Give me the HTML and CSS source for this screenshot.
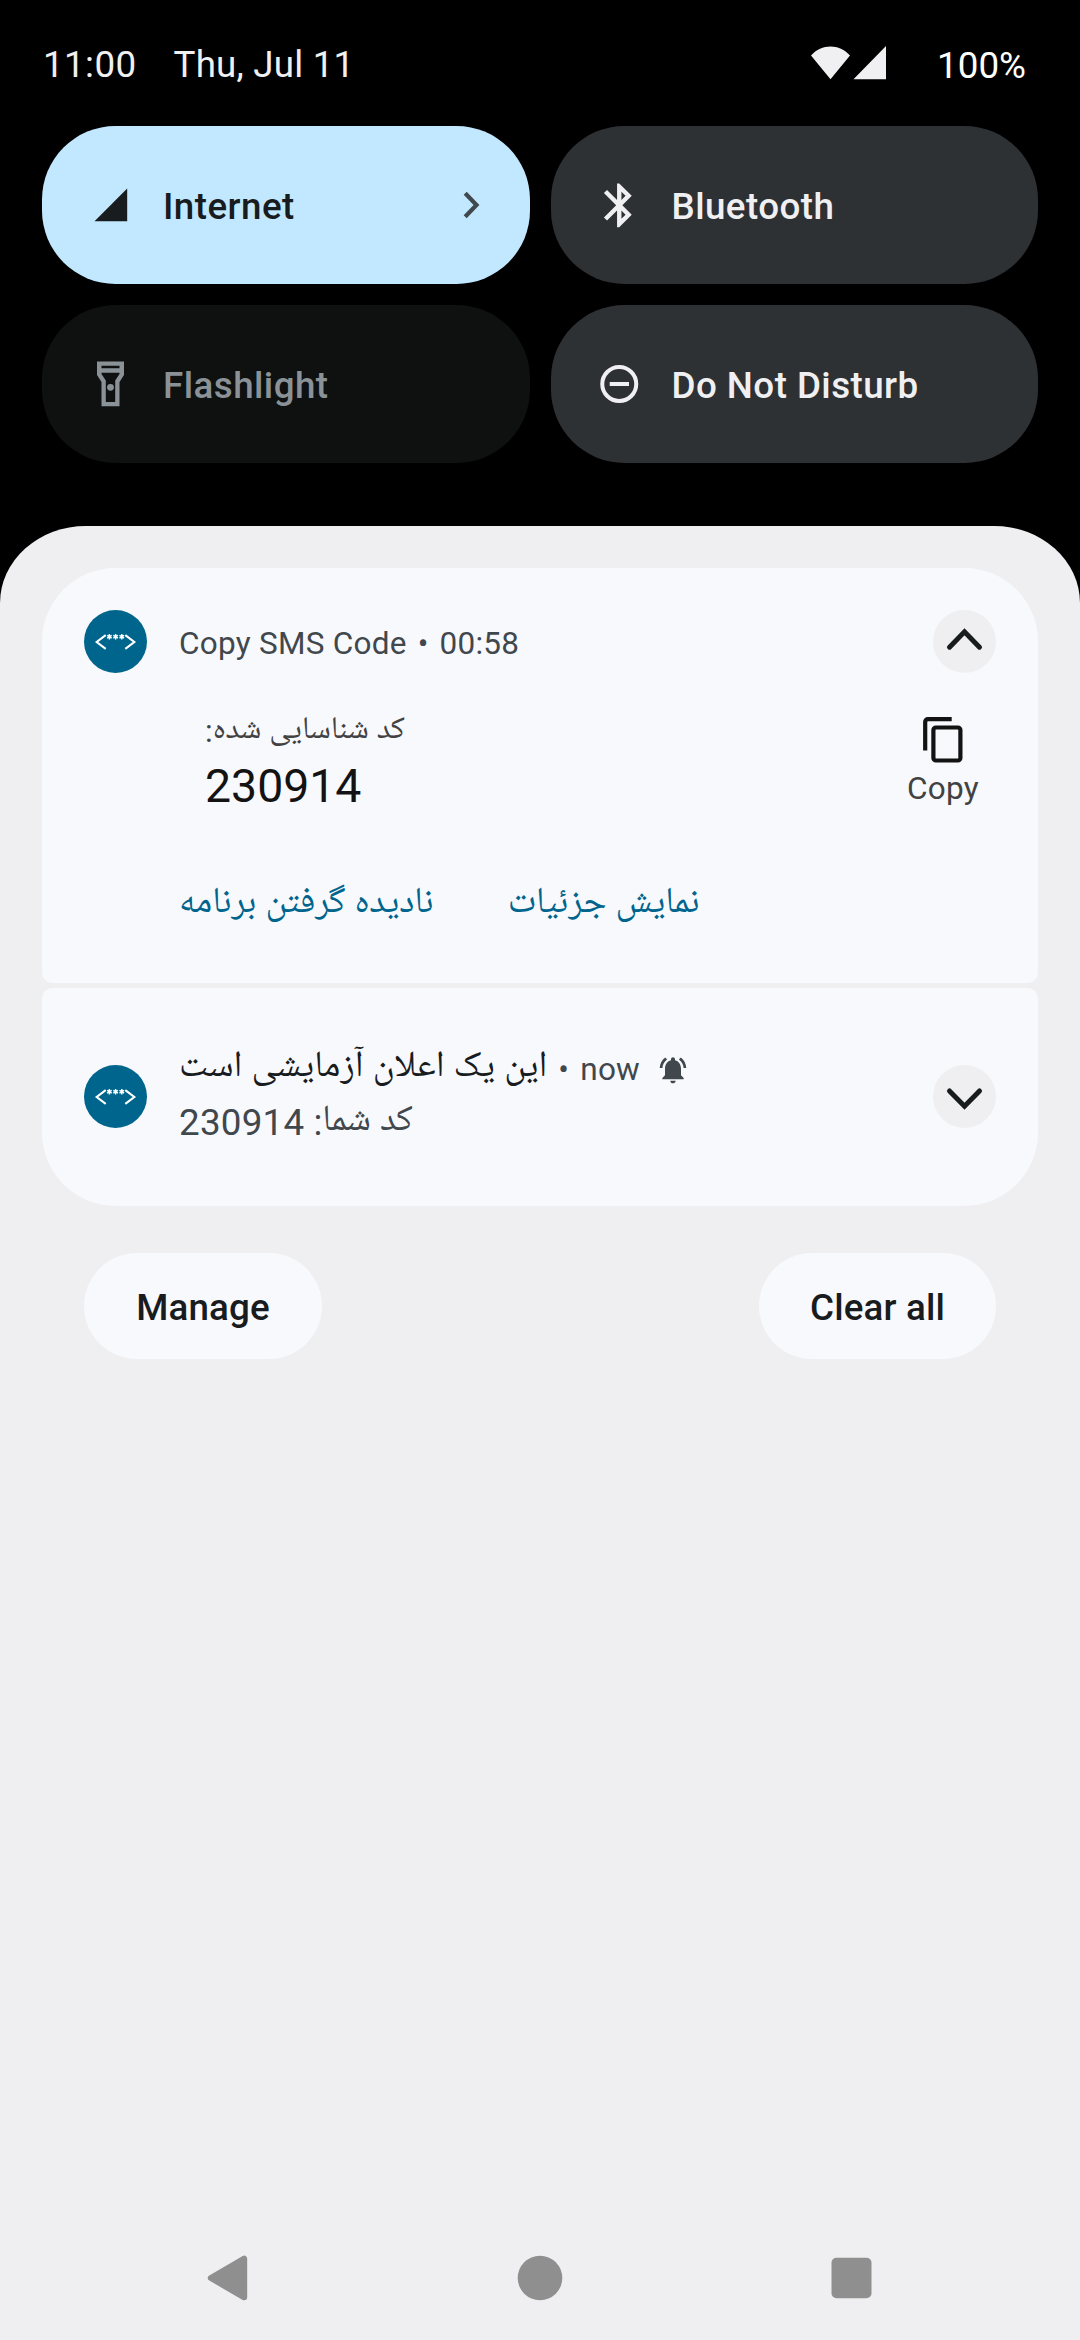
FILE: index.html
```html
<!DOCTYPE html>
<html lang="en">
<head>
<meta charset="utf-8">
<title>Notification shade</title>
<link rel="stylesheet" href="styles.css">
</head>
<body>
<svg class="defs" width="0" height="0">
  <symbol id="app" viewBox="0 0 63 63">
    <g fill="none" stroke="#fff" stroke-width="2.100">
      <path d="M21.700 25.200l-9 6.800 9 6.800M41.300 25.200l9 6.800-9 6.800"/>
      <path stroke-width="1.400" d="M25.400 24v5.400M23.100 25.300l4.600 2.800M23.100 28.100l4.600-2.800M31.600 24v5.400M29.300 25.300l4.600 2.800M29.300 28.100l4.600-2.800M37.800 24v5.400M35.500 25.300l4.600 2.800M35.500 28.100l4.600-2.800"/>
    </g>
  </symbol>
</svg>
<header class="status">
  <span class="time">11:00</span>
  <span class="date">Thu, Jul 11</span>
  <svg class="signals" viewBox="0 0 76 34"><path d="M0 9.500C10.500-2.600 28.500-2.600 39 9.500L19.500 33.200zM42.500 33.200H75V0z" fill="#f0f0f2"/></svg>
  <span class="battery">100%</span>
</header>
<section class="tiles">
  <div class="tile on">
    <svg class="ico" viewBox="0 0 52.500 52.500"><path d="M10.500 42.200H43.200V9.500z" fill="currentColor"/></svg>
    <span>Internet</span>
    <svg class="more" viewBox="0 0 17 28"><path d="M2.200 2.200L13.500 14 2.200 25.800" fill="none" stroke="#41484d" stroke-width="4.200"/></svg>
  </div>
  <div class="tile">
    <svg class="ico" viewBox="0 0 24 24"><path fill="currentColor" d="M17.710 7.710L12 2h-1v7.590L6.410 5 5 6.410 10.590 12 5 17.590 6.410 19 11 14.410V22h1l5.710-5.710-4.300-4.290 4.300-4.290zM13 5.830l1.880 1.880L13 9.590V5.830zm1.880 10.460L13 18.170v-3.760l1.880 1.880z"/></svg>
    <span>Bluetooth</span>
  </div>
  <div class="tile off">
    <svg class="ico" viewBox="0 0 52.500 52.500"><path fill="currentColor" fill-rule="evenodd" d="M13 3.500H40V17L35.500 24V48.200H17.500V24L13 17zM17.500 7.700V10.300H35.500V7.700zM17.500 14.800V16L21.800 22.500V44H31.200V22.500L35.500 16V14.800z"/><circle cx="26.500" cy="29.300" r="3.400" fill="currentColor"/></svg>
    <span>Flashlight</span>
  </div>
  <div class="tile">
    <svg class="ico" viewBox="0 0 52.500 52.500"><g fill="none" stroke="currentColor" stroke-width="4"><circle cx="26.250" cy="26" r="17"/><path d="M16.700 26H36"/></g></svg>
    <span>Do Not Disturb</span>
  </div>
</section>
<main class="shade">
  <article class="card first">
    <svg class="app"><use href="#app"/></svg>
    <div class="body">
      <div class="meta"><span>Copy SMS Code</span><span class="dot">•</span><span>00:58</span></div>
      <div class="content">
        <div class="code">
          <span class="fa label" dir="rtl">کد شناسایی شده:</span>
          <span class="number">230914</span>
        </div>
        <div class="copy">
          <svg viewBox="0 0 40 46"><g fill="none" stroke="#131313" stroke-width="4.200"><path d="M28.700 2.200H5Q2.200 2.200 2.200 5V33.500"/><rect x="10.400" y="10.500" width="27" height="33" rx="2.500"/></g></svg>
          <span>Copy</span>
        </div>
      </div>
      <div class="actions">
        <span class="fa" dir="rtl">نادیده گرفتن برنامه</span>
        <span class="fa" dir="rtl">نمایش جزئیات</span>
      </div>
    </div>
    <div class="expand"><svg viewBox="0 0 63 63"><path d="M16.500 37.200L31.500 21.800 46.500 37.200"/></svg></div>
  </article>
  <article class="card second">
    <svg class="app"><use href="#app"/></svg>
    <div class="body">
      <div class="title"><span class="fa" dir="rtl">این یک اعلان آزمایشی است</span><span class="dot">•</span><span>now</span>
        <svg class="bell" viewBox="0 0 24 24"><path fill="#41484d" d="M7.580 4.080L6.150 2.650C3.750 4.480 2.170 7.300 2.030 10.500h2c.150-2.650 1.510-4.970 3.550-6.420zm12.390 6.420h2c-.150-3.200-1.730-6.020-4.120-7.850l-1.420 1.430c2.020 1.450 3.390 3.770 3.540 6.420zM18 11c0-3.070-1.640-5.640-4.500-6.320V4c0-.830-.670-1.500-1.500-1.500s-1.500.670-1.500 1.500v.680C7.630 5.360 6 7.920 6 11v5l-2 2v1h16v-1l-2-2v-5zm-6 11c.140 0 .270-.010.400-.040.650-.140 1.180-.580 1.440-1.180.100-.240.150-.500.150-.780h-4c.010 1.100.900 2 2.010 2z"/></svg>
      </div>
      <div class="text"><span>230914</span><span class="fa" dir="rtl">کد شما:</span></div>
    </div>
    <div class="expand"><svg viewBox="0 0 63 63"><path d="M16.500 26L31.500 41.200 46.500 26"/></svg></div>
  </article>
  <footer class="buttons"><span class="button">Manage</span><span class="button clear">Clear all</span></footer>
  <nav class="nav">
    <svg viewBox="0 0 46 46"><path d="M40.200 3.700V42.300L6.800 23z" fill="#8f8f8f" stroke="#8f8f8f" stroke-width="6" stroke-linejoin="round"/></svg>
    <svg viewBox="0 0 46 46"><circle cx="23" cy="23" r="22.300" fill="#8f8f8f"/></svg>
    <svg viewBox="0 0 46 46"><rect x="1.500" y="2.700" width="40" height="40.500" rx="5" fill="#8f8f8f"/></svg>
  </nav>
</main>
</body>
</html>
```
FILE: styles.css
```css
* { box-sizing: border-box; }
body {
  margin: 0;
  width: 1080px;
  height: 2340px;
  display: flex;
  flex-direction: column;
  background: #000;
  font-family: Roboto, "Noto Naskh Arabic UI", "Noto Naskh Arabic", "DejaVu Sans", sans-serif;
  overflow: hidden;
}
span { white-space: nowrap; }
svg { display: block; flex: none; }
.defs { position: absolute; }

.status {
  height: 126px;
  padding: 3px 54px 0 43px;
  display: flex;
  align-items: center;
  font-size: 36.75px;
  color: #f0f0f2;
}
.time { letter-spacing: 0.4px; }
.date { margin-left: 37px; letter-spacing: 0.2px; }
.signals { width: 76px; height: 34px; margin-left: auto; margin-bottom: 4px; }
.battery { margin: 2px 0 0 50px; color: #fff; }

.tiles {
  display: grid;
  grid-template-columns: 1fr 1fr;
  grid-auto-rows: 158px;
  gap: 21px;
  padding: 0 42px;
  height: 400px;
}
.tile {
  display: flex;
  align-items: center;
  padding: 0 50px 0 42px;
  border-radius: 73.5px;
  background: #2e3134;
  color: #f0f0f2;
  font-size: 36.75px;
  font-weight: 500;
  letter-spacing: 0.45px;
}
.tile span { margin: 3px 0 0 26.5px; }
.tile.on { background: #c2e8ff; color: #191c1e; }
.tile.off { background: #0e1110; color: #8b9297; }
.ico { width: 52.5px; height: 52.5px; }
.more { width: 17px; height: 28px; margin-left: auto; }

.shade {
  flex: 1;
  display: flex;
  flex-direction: column;
  padding: 42px 42px 0;
  border-radius: 86px 86px 0 0 / 77px 77px 0 0;
  background: #efeff1;
}
.card {
  display: flex;
  background: #f8f9fd;
  color: #41484d;
  font-size: 31.5px;
  letter-spacing: 0.25px;
}
.fa { letter-spacing: 0; }
.first { height: 415px; padding: 42px 42px 0; border-radius: 73.5px 73.5px 10.5px 10.5px; }
.second { height: 218px; margin-top: 5px; padding: 0 42px; border-radius: 10.5px 10.5px 73.5px 73.5px; }
.app { width: 63px; height: 63px; border-radius: 50%; background: #00658d; }
.body { flex: 1; margin-left: 32px; }
.expand { width: 63px; height: 63px; border-radius: 50%; background: #efeff1; margin-left: -63px; }
.expand path { fill: none; stroke: #191c1e; stroke-width: 5; stroke-linecap: round; }
.second .app, .second .expand { margin-top: 77px; }
.meta { display: flex; height: 66px; line-height: 67px; }
.dot { margin: 0 11px; }

.content { display: flex; justify-content: space-between; height: 172px; }
.code { display: flex; flex-direction: column; padding-left: 26px; }
.label { height: 68px; line-height: 112px; font-size: 31.7px; color: #424242; }
.number { height: 60px; line-height: 84px; font-size: 46.4px; letter-spacing: 0; color: #131313; }
.copy { width: 107px; padding-top: 41px; display: flex; flex-direction: column; align-items: center; color: #424242; }
.copy svg { width: 40px; height: 46px; }
.copy span { line-height: 51px; padding-left: 1px; }
.actions { display: flex; gap: 74px; color: #00658d; font-size: 36.6px; line-height: 113px; }

.second .body { padding-top: 60px; }
.title { display: flex; height: 50px; line-height: 43px; }
.title .fa { color: #191c1e; font-size: 37px; line-height: 41px; }
.bell { width: 32px; height: 32px; margin: 6px 0 0 17px; }
.text { display: flex; gap: 9px; font-size: 36.75px; line-height: 50px; }

.buttons { display: flex; justify-content: space-between; margin-top: 47px; padding: 0 42px; }
.button {
  width: 238px;
  height: 106px;
  line-height: 109px;
  text-align: center;
  border-radius: 53px;
  background: #f8f9fd;
  color: #191c1e;
  font-size: 36.75px;
  font-weight: 500;
  letter-spacing: 0.15px;
}
.button.clear { width: 237px; }
.nav { display: flex; justify-content: space-between; margin: auto 162px 39px 162px; }
.nav svg { width: 46px; height: 46px; }
```
